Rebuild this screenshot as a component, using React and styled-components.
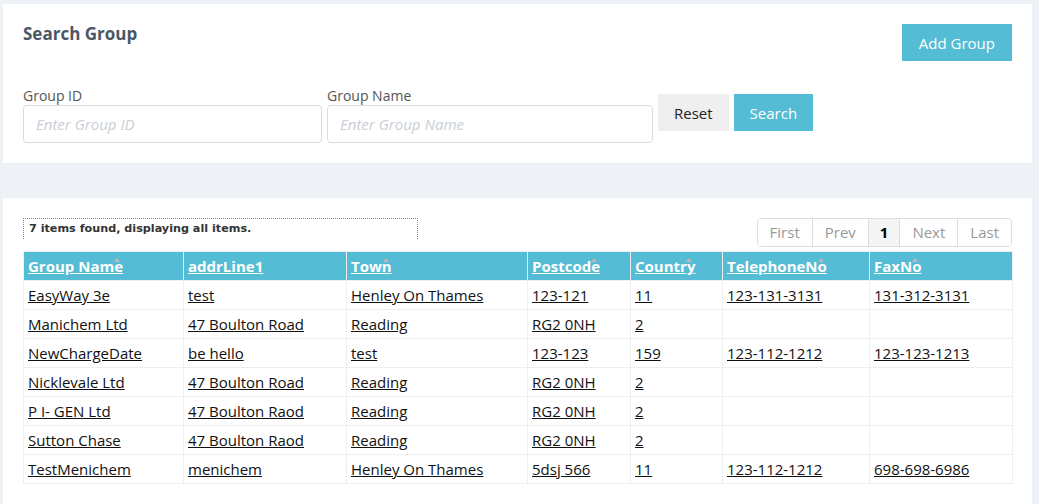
import React from 'react';
import styled, { createGlobalStyle } from 'styled-components';

const GlobalStyle = createGlobalStyle`
  body {
    margin: 0;
    background: #eef1f5;
    font-family: "Open Sans", "Noto Sans", sans-serif;
    color: #333;
  }
`;

const rows = [
  ['EasyWay 3e', 'test', 'Henley On Thames', '123-121', '11', '123-131-3131', '131-312-3131'],
  ['Manichem Ltd', '47 Boulton Road', 'Reading', 'RG2 0NH', '2', '', ''],
  ['NewChargeDate', 'be hello', 'test', '123-123', '159', '123-112-1212', '123-123-1213'],
  ['Nicklevale Ltd', '47 Boulton Road', 'Reading', 'RG2 0NH', '2', '', ''],
  ['P I- GEN Ltd', '47 Boulton Raod', 'Reading', 'RG2 0NH', '2', '', ''],
  ['Sutton Chase', '47 Boulton Raod', 'Reading', 'RG2 0NH', '2', '', ''],
  ['TestMenichem', 'menichem', 'Henley On Thames', '5dsj 566', '11', '123-112-1212', '698-698-6986'],
];

const columns = [
  { label: 'Group Name', width: 160, sort: true },
  { label: 'addrLine1', width: 163, sort: false },
  { label: 'Town', width: 181, sort: true },
  { label: 'Postcode', width: 103, sort: true },
  { label: 'Country', width: 92, sort: true },
  { label: 'TelephoneNo', width: 147, sort: true },
  { label: 'FaxNo', width: 143, sort: true },
];

const pages = ['First', 'Prev', '1', 'Next', 'Last'];

export default function App() {
  return (
    <>
      <GlobalStyle />
      <Page>
        <Panel>
          <TopBar>
            <Title>Search Group</Title>
            <Button $primary $wide>Add Group</Button>
          </TopBar>
          <Form>
            <Field>
              <Label>Group ID</Label>
              <Input $width={299} placeholder="Enter Group ID" />
            </Field>
            <Field>
              <Label>Group Name</Label>
              <Input $width={326} placeholder="Enter Group Name" />
            </Field>
            <Actions>
              <Button>Reset</Button>
              <Button $primary>Search</Button>
            </Actions>
          </Form>
        </Panel>

        <ResultPanel>
          <ResultBar>
            <Info>7 items found, displaying all items.</Info>
            <Pager>
              {pages.map((p) => (
                <PageItem key={p} $active={p === '1'}>{p}</PageItem>
              ))}
            </Pager>
          </ResultBar>
          <Table>
            <colgroup>
              {columns.map((c) => (
                <col key={c.label} style={{ width: c.width }} />
              ))}
            </colgroup>
            <thead>
              <tr>
                {columns.map((c) => (
                  <Th key={c.label}>
                    <SortLink $sort={c.sort}>{c.label}</SortLink>
                  </Th>
                ))}
              </tr>
            </thead>
            <tbody>
              {rows.map((r, i) => (
                <tr key={i}>
                  {r.map((v, j) => (
                    <Td key={j}>{v && <CellLink>{v}</CellLink>}</Td>
                  ))}
                </tr>
              ))}
            </tbody>
          </Table>
        </ResultPanel>
      </Page>
    </>
  );
}

const Page = styled.div`
  padding: 4px 7px 0 3px;
  display: flex;
  flex-direction: column;
  gap: 35px;
`;

const Panel = styled.div`
  background: #fff;
  height: 159px;
  box-sizing: border-box;
  padding: 20px 20px 0 20px;
  box-shadow: 0 1px 2px rgba(0, 0, 0, 0.03);
`;

const TopBar = styled.div`
  display: flex;
  justify-content: space-between;
  align-items: flex-start;
`;

const Title = styled.h3`
  margin: 0;
  line-height: 20px;
  font-size: 17px;
  font-weight: 700;
  color: #4b5767;
`;

const Form = styled.div`
  display: flex;
  align-items: flex-start;
  gap: 5px;
  margin-top: 24px;
`;

const Field = styled.div`
  display: flex;
  flex-direction: column;
`;

const Label = styled.label`
  font-size: 14px;
  color: #555;
  line-height: 19px;
  margin-top: 1px;
`;

const Input = styled.input`
  width: ${(p) => p.$width}px;
  height: 38px;
  box-sizing: border-box;
  border: 1px solid #dcdcdc;
  border-radius: 4px;
  padding: 0 12px;
  font-family: "Open Sans", "Noto Sans", sans-serif;
  font-size: 15px;
  &::placeholder {
    color: #c9ced6;
    font-style: italic;
  }
`;

const Actions = styled.div`
  display: flex;
  gap: 5px;
  margin-top: 9px;
`;

const Button = styled.button`
  height: 37px;
  padding: 0 ${(p) => (p.$wide ? 17 : 16)}px;
  border: none;
  background: ${(p) => (p.$primary ? '#54bcd4' : '#efefef')};
  color: ${(p) => (p.$primary ? '#fff' : '#222')};
  font-family: "Open Sans", "Noto Sans", sans-serif;
  font-size: 15px;
`;

const ResultPanel = styled.div`
  background: #fff;
  padding: 20px 20px 20px 20px;
  min-height: 300px;
`;

const ResultBar = styled.div`
  display: flex;
  justify-content: space-between;
  align-items: flex-start;
  margin-bottom: 4px;
`;

const Info = styled.div`
  width: 395px;
  height: 21px;
  box-sizing: border-box;
  border: 1px dotted #888;
  border-bottom: none;
  padding: 3px 0 0 5px;
  font-family: "DejaVu Sans", Verdana, sans-serif;
  font-size: 11.2px;
  font-weight: 700;
  color: #333;
`;

const Pager = styled.div`
  display: flex;
  border: 1px solid #ddd;
  border-radius: 4px;
  overflow: hidden;
`;

const PageItem = styled.span`
  height: 27px;
  line-height: 27px;
  padding: 0 ${(p) => (p.$active ? 11 : 12)}px;
  font-size: 15px;
  color: ${(p) => (p.$active ? '#000' : '#999')};
  font-weight: ${(p) => (p.$active ? 700 : 400)};
  background: ${(p) => (p.$active ? '#f5f5f5' : '#fff')};
  & + & {
    border-left: 1px solid #ddd;
  }
`;

const Table = styled.table`
  border-collapse: collapse;
  table-layout: fixed;
  width: 989px;
  font-size: 15px;
`;

const Th = styled.th`
  background: #54bcd4;
  height: 28px;
  padding: 0 4px;
  text-align: left;
  border: 1px solid #eee;
`;

const SortLink = styled.a`
  position: relative;
  color: #fff;
  font-weight: 700;
  text-decoration: underline;
  &::after {
    content: ${(p) => (p.$sort ? '""' : 'none')};
    position: absolute;
    right: 3px;
    top: 2px;
    border-left: 3px solid transparent;
    border-right: 3px solid transparent;
    border-bottom: 4px solid #b9b9b9;
  }
`;

const Td = styled.td`
  height: 28px;
  padding: 0 4px;
  border: 1px solid #eee;
  white-space: nowrap;
`;

const CellLink = styled.a`
  color: #111;
  text-decoration: underline;
`;
